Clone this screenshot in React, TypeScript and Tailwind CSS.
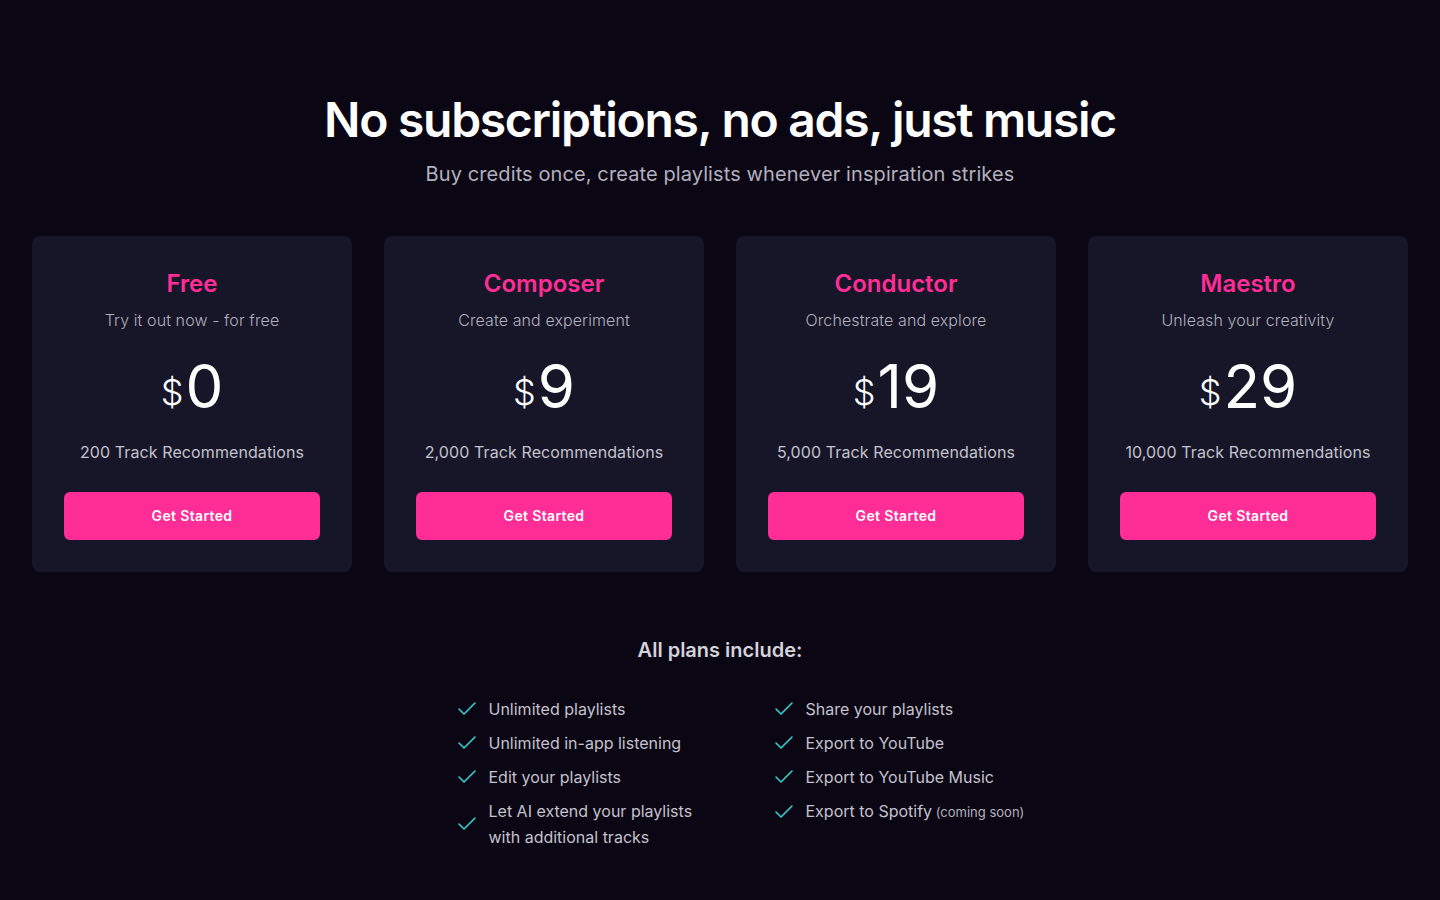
import { Check } from "lucide-react";

const plans = [
  { name: "Free", tagline: "Try it out now - for free", price: "0", tracks: "200" },
  { name: "Composer", tagline: "Create and experiment", price: "9", tracks: "2,000" },
  { name: "Conductor", tagline: "Orchestrate and explore", price: "19", tracks: "5,000" },
  { name: "Maestro", tagline: "Unleash your creativity", price: "29", tracks: "10,000" },
];

const leftFeatures = [
  "Unlimited playlists",
  "Unlimited in-app listening",
  "Edit your playlists",
  "Let AI extend your playlists with additional tracks",
];

const rightFeatures = [
  "Share your playlists",
  "Export to YouTube",
  "Export to YouTube Music",
  "Export to Spotify",
];

function Feature({ text, soon }: { text: string; soon?: boolean }) {
  return (
    <li className="flex items-center gap-[10px]">
      <Check className="w-6 h-6 text-[#35cfd0] shrink-0" strokeWidth={1.6} />
      <span
        className={
          soon
            ? "whitespace-nowrap text-base leading-[26px] text-[#c4c2cc]"
            : "max-w-[230px] text-base leading-[26px] text-[#c4c2cc]"
        }
      >
        {text}
        {soon && <span className="text-[13px] text-[#b5b3bd]"> (coming soon)</span>}
      </span>
    </li>
  );
}

export default function App() {
  return (
    <div
      className="min-h-screen bg-[#0a0614] text-white px-8 pt-24 pb-16"
      style={{ fontFamily: "Inter, 'Noto Sans', sans-serif" }}
    >
      <h1 className="text-center text-5xl leading-none font-semibold tracking-[-1.3px]">
        No subscriptions, no ads, just music
      </h1>
      <p className="mt-4 text-center text-xl leading-7 tracking-[0.1px] text-[#b3b0bd]">
        Buy credits once, create playlists whenever inspiration strikes
      </p>

      <div className="mt-12 grid grid-cols-4 gap-8">
        {plans.map((p) => (
          <div key={p.name} className="rounded-lg bg-[#161628] px-8 pt-8 pb-8 text-center">
            <h2 className="text-2xl leading-8 font-semibold text-[#ff2d95]">{p.name}</h2>
            <p className="mt-2 text-base leading-6 font-light tracking-[0.1px] text-[#b3b0bd]">{p.tagline}</p>
            <div className="mt-6 flex items-end justify-center leading-none">
              <span className="text-4xl font-light leading-none mb-[6px] mr-[2px]">$</span>
              <span className="text-6xl leading-none">{p.price}</span>
            </div>
            <p className="mt-6 text-base leading-6 tracking-[0.1px] text-[#c4c2cc]">{p.tracks} Track Recommendations</p>
            <button className="mt-7 h-12 w-full rounded-md bg-[#ff2d95] text-sm font-semibold tracking-wide text-white">
              Get Started
            </button>
          </div>
        ))}
      </div>

      <h3 className="mt-16 text-center text-xl leading-7 font-semibold text-[#d4d2da]">All plans include:</h3>

      <div className="mt-8 flex justify-center pl-[36px]">
        <div className="grid grid-cols-[317px_250px]">
          <ul className="flex flex-col gap-2">
            {leftFeatures.map((f) => (
              <Feature key={f} text={f} />
            ))}
          </ul>
          <ul className="flex flex-col gap-2">
            {rightFeatures.map((f, i) => (
              <Feature key={f} text={f} soon={i === 3} />
            ))}
          </ul>
        </div>
      </div>
    </div>
  );
}
